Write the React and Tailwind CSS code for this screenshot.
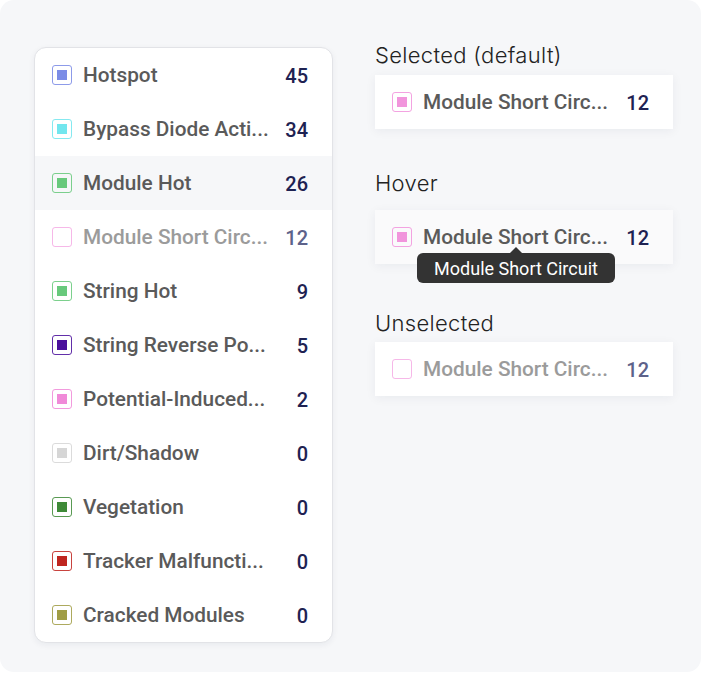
const items = [
  { label: 'Hotspot', count: 45, color: '#7b8ce6' },
  { label: 'Bypass Diode Acti...', count: 34, color: '#72e6ee' },
  { label: 'Module Hot', count: 26, color: '#68c97c', hover: true },
  { label: 'Module Short Circ...', count: 12, color: '#f195dc', off: true },
  { label: 'String Hot', count: 9, color: '#68c97c' },
  { label: 'String Reverse Po...', count: 5, color: '#4a0f9c' },
  { label: 'Potential-Induced...', count: 2, color: '#f08ad8' },
  { label: 'Dirt/Shadow', count: 0, color: '#d6d6d6' },
  { label: 'Vegetation', count: 0, color: '#3f8a38' },
  { label: 'Tracker Malfuncti...', count: 0, color: '#bf2620' },
  { label: 'Cracked Modules', count: 0, color: '#a09d45' },
]

function Box({ color, off }) {
  return (
    <span
      className="w-5 h-5 shrink-0 rounded-[3px] border-[1.5px] flex items-center justify-center"
      style={{ borderColor: off ? color + 'aa' : color + 'dd' }}
    >
      {!off && <span className="w-[10px] h-[10px]" style={{ backgroundColor: color }} />}
    </span>
  )
}

function Row({ item, className = '' }) {
  return (
    <div className={`h-[54px] flex items-center pl-[17px] pr-[24px] ${className}`}>
      <Box color={item.color} off={item.off} />
      <span
        className={`ml-[11px] mt-[2px] text-[20.8px] font-medium whitespace-nowrap ${item.off ? 'text-[#9b9b9b]' : 'text-[#5a5a5a]'}`}
      >
        {item.label}
      </span>
      <span className={`ml-auto mt-[1px] text-[20px] font-medium ${item.off ? 'text-[#5d628a]' : 'text-[#1e2252]'}`}>
        {item.count}
      </span>
    </div>
  )
}

const sample = { label: 'Module Short Circ...', count: 12, color: '#f195dc' }

const labelCls = 'text-[22px] leading-[28px] font-light tracking-[0.015em] text-[#222]'

export default function App() {
  return (
    <div className="bg-white min-h-[675px]" style={{ fontFamily: 'Roboto, "Liberation Sans", sans-serif' }}>
      <div className="w-[701px] h-[672px] bg-[#f6f7f9] rounded-[14px] flex items-start">
        <div className="ml-[34px] mt-[47px] w-[299px] bg-white border border-[#e2e3e7] rounded-[12px] overflow-hidden shadow-[0_2px_6px_rgba(20,30,60,0.06)]">
          {items.map((item) => (
            <Row key={item.label} item={item} className={item.hover ? 'bg-[#f6f7f9]' : ''} />
          ))}
        </div>

        <div className="ml-[42px] pt-[41px] flex flex-col">
          <div className={`${labelCls} mb-[6px]`} style={{ fontFamily: 'Inter, sans-serif' }}>
            Selected (default)
          </div>
          <div className="w-[298px] bg-white shadow-[0_2px_10px_rgba(20,30,60,0.06)]">
            <Row item={sample} />
          </div>

          <div className={`${labelCls} mt-[40px] mb-[13px]`} style={{ fontFamily: 'Inter, sans-serif' }}>
            Hover
          </div>
          <div className="relative w-[298px] bg-[#fafafb] shadow-[0_2px_10px_rgba(20,30,60,0.06)]">
            <Row item={sample} />
            <div className="absolute left-[42px] top-[43px] w-[198px] h-[30px] bg-[#333333] rounded-[6px] flex items-center justify-center text-white text-[18px]">
              <span className="absolute -top-[6px] left-[93px] w-0 h-0 border-l-[6px] border-r-[6px] border-b-[6px] border-l-transparent border-r-transparent border-b-[#333333]" />
              Module Short Circuit
            </div>
          </div>

          <div className={`${labelCls} mt-[45px] mb-[5px]`} style={{ fontFamily: 'Inter, sans-serif' }}>
            Unselected
          </div>
          <div className="w-[298px] bg-white shadow-[0_2px_10px_rgba(20,30,60,0.06)]">
            <Row item={{ ...sample, off: true }} />
          </div>
        </div>
      </div>
    </div>
  )
}
